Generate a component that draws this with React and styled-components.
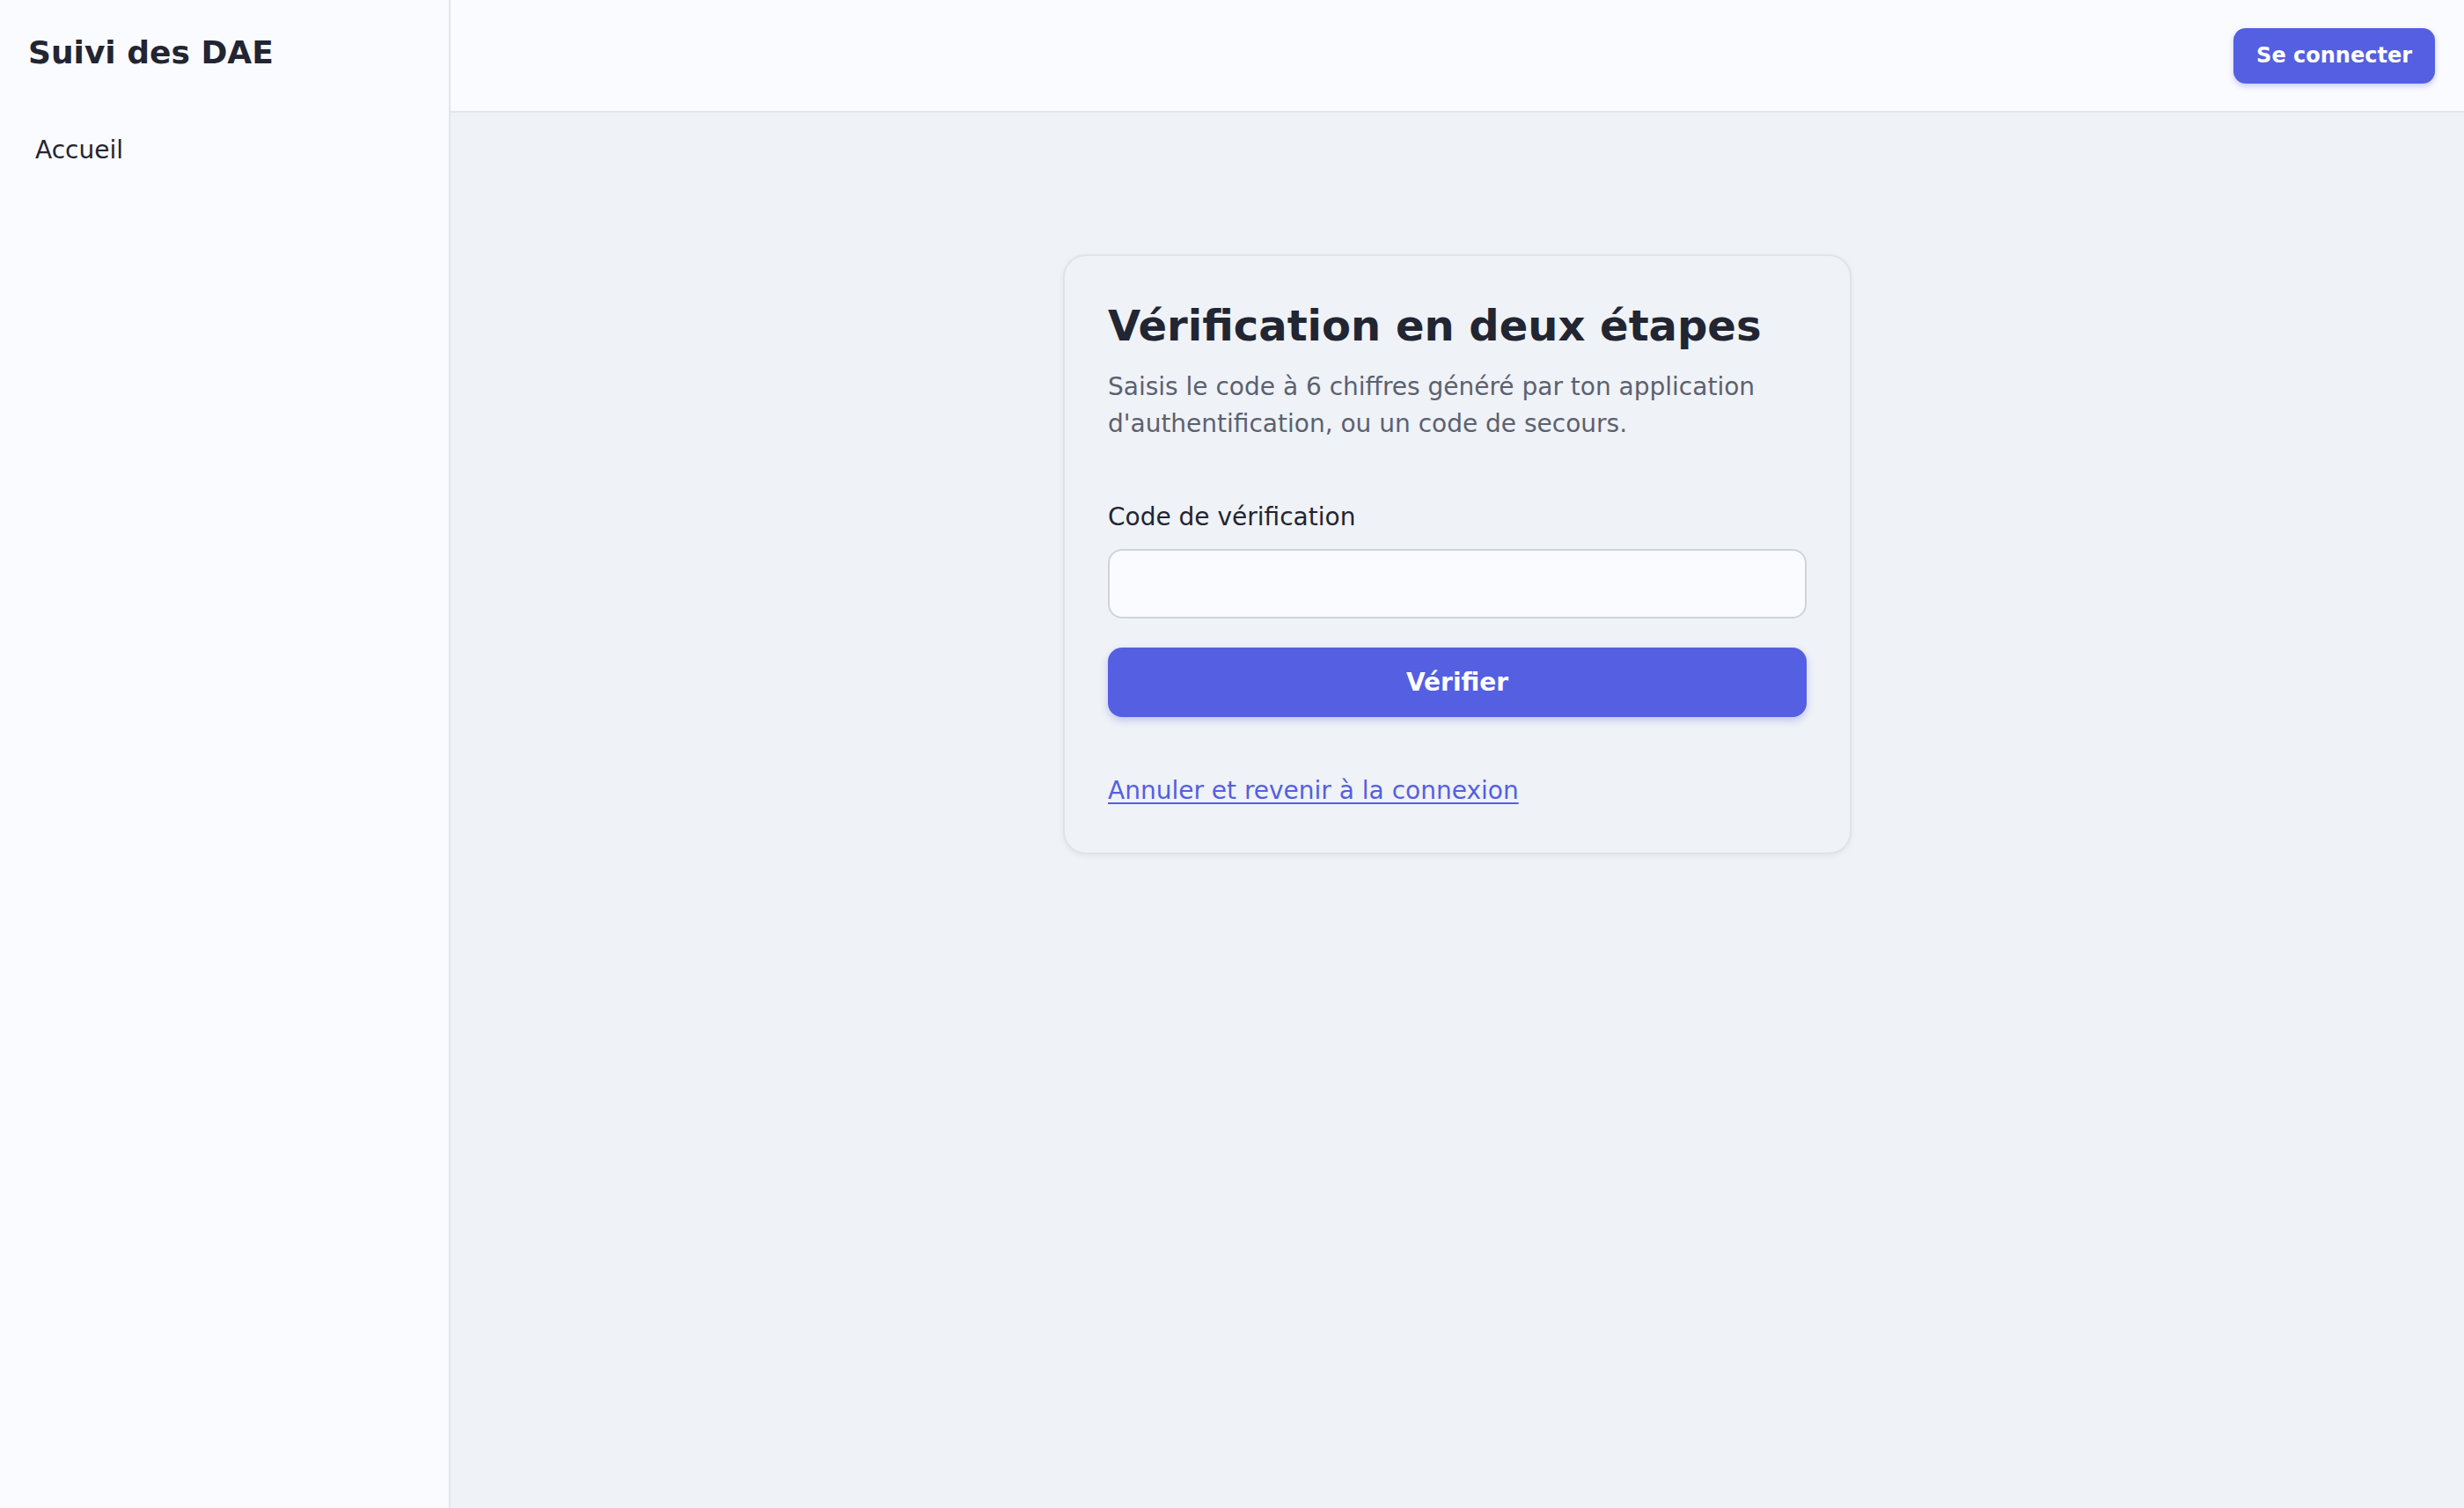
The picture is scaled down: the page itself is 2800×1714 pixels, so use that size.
import React from "react";
import styled, { createGlobalStyle } from "styled-components";

const GlobalStyle = createGlobalStyle`
  * {
    box-sizing: border-box;
  }
  body {
    margin: 0;
    font-family: "DejaVu Sans", "Liberation Sans", sans-serif;
    color: #222532;
    background: #eff2f6;
  }
`;

const Layout = styled.div`
  display: flex;
  min-height: 100vh;
`;

const Sidebar = styled.aside`
  width: 512px;
  flex-shrink: 0;
  background: #fafbfe;
  border-right: 2px solid #e2e5eb;
  padding: 34px 32px;
`;

const Brand = styled.div`
  font-size: 36px;
  font-weight: 700;
  line-height: 51px;
  color: #222532;
`;

const Nav = styled.nav`
  margin-top: 50px;
  display: flex;
  flex-direction: column;
`;

const NavItem = styled.a`
  display: block;
  padding: 16px 8px;
  font-size: 28px;
  line-height: 40px;
  color: #222532;
  text-decoration: none;
  border-radius: 12px;
`;

const Main = styled.div`
  flex: 1;
  display: flex;
  flex-direction: column;
`;

const Header = styled.header`
  height: 128px;
  background: #fafbfe;
  border-bottom: 2px solid #e2e5eb;
  display: flex;
  align-items: center;
  justify-content: flex-end;
  padding: 0 33px;
`;

const HeaderButton = styled.button`
  height: 63px;
  padding: 0 26px;
  border: none;
  border-radius: 14px;
  background: #545fe1;
  color: #ffffff;
  font-family: inherit;
  font-size: 24px;
  font-weight: 700;
  box-shadow: 0 3px 6px rgba(84, 95, 225, 0.3);
  cursor: pointer;
`;

const Content = styled.main`
  flex: 1;
  display: flex;
  justify-content: center;
  align-items: flex-start;
  padding-top: 161px;
`;

const Card = styled.section`
  width: 896px;
  background: #eff2f6;
  border: 2px solid #e0e3e9;
  border-radius: 26px;
  padding: 50px 49px 50px;
  box-shadow: 0 2px 6px rgba(20, 30, 60, 0.06);
`;

const Title = styled.h1`
  margin: 0;
  font-size: 48px;
  font-weight: 700;
  line-height: 58px;
  color: #222532;
`;

const Subtitle = styled.p`
  margin: 20px 0 0;
  font-size: 28px;
  line-height: 42px;
  color: #5b6170;
`;

const Form = styled.form`
  margin-top: 65px;
  display: flex;
  flex-direction: column;
`;

const Label = styled.label`
  font-size: 28px;
  line-height: 40px;
  color: #222532;
`;

const Input = styled.input`
  margin-top: 16px;
  height: 79px;
  width: 100%;
  border: 2px solid #d1d3d8;
  border-radius: 16px;
  background: #fafbfe;
  font-family: inherit;
  font-size: 28px;
  padding: 0 24px;
  outline: none;
`;

const SubmitButton = styled.button`
  margin-top: 33px;
  height: 79px;
  width: 100%;
  border: none;
  border-radius: 16px;
  background: #545fe1;
  color: #ffffff;
  font-family: inherit;
  font-size: 28px;
  font-weight: 700;
  box-shadow: 0 4px 8px rgba(84, 95, 225, 0.3);
  cursor: pointer;
`;

const CancelLink = styled.a`
  display: inline-block;
  margin-top: 64px;
  font-size: 28px;
  line-height: 40px;
  color: #545fe1;
  text-decoration: underline;
  text-underline-offset: 4px;
`;

export default function App() {
  return (
    <>
      <GlobalStyle />
      <Layout>
        <Sidebar>
          <Brand>Suivi des DAE</Brand>
          <Nav>
            <NavItem href="#">Accueil</NavItem>
          </Nav>
        </Sidebar>
        <Main>
          <Header>
            <HeaderButton>Se connecter</HeaderButton>
          </Header>
          <Content>
            <Card>
              <Title>Vérification en deux étapes</Title>
              <Subtitle>
                Saisis le code à 6 chiffres généré par ton application
                d'authentification, ou un code de secours.
              </Subtitle>
              <Form onSubmit={(e) => e.preventDefault()}>
                <Label htmlFor="code">Code de vérification</Label>
                <Input id="code" type="text" />
                <SubmitButton type="submit">Vérifier</SubmitButton>
              </Form>
              <CancelLink href="#">Annuler et revenir à la connexion</CancelLink>
            </Card>
          </Content>
        </Main>
      </Layout>
    </>
  );
}
